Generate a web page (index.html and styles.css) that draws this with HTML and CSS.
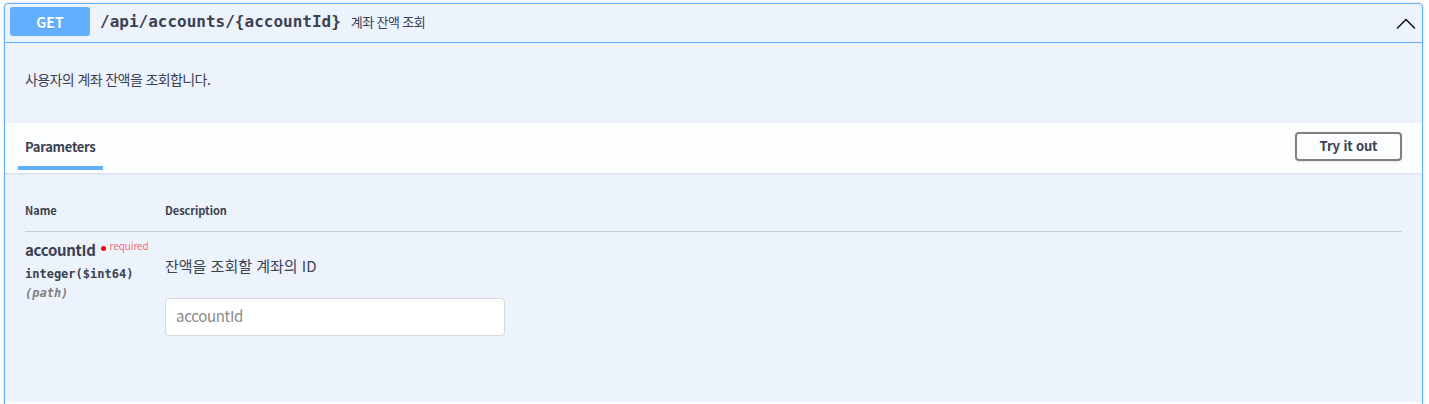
FILE: index.html
```html
<!DOCTYPE html>
<html lang="ko">
<head>
<meta charset="utf-8">
<title>GET /api/accounts/{accountId}</title>
<link rel="stylesheet" href="styles.css">
</head>
<body>
<div class="opblock">
  <div class="summary">
    <span class="method">GET</span>
    <span class="path">/api/accounts/{accountId}</span>
    <span class="summary-desc">계좌 잔액 조회</span>
    <svg class="arrow" width="20" height="20" viewBox="0 0 20 20"><path d="M1.5 15 L10 6.5 L18.5 15" fill="none" stroke="#111" stroke-width="1.5" stroke-linecap="round" stroke-linejoin="round"/></svg>
  </div>
  <div class="desc-wrapper">
    <p>사용자의 계좌 잔액을 조회합니다.</p>
  </div>
  <div class="section-header">
    <div class="tab"><span class="tab-label">Parameters</span></div>
    <button class="try-btn">Try it out</button>
  </div>
  <div class="table-container">
    <div class="param-head">
      <div class="col-name">Name</div>
      <div class="col-desc">Description</div>
    </div>
    <div class="param-row">
      <div class="col-name">
        <div class="param-name">accountId<span class="star"></span><span class="req">required</span></div>
        <div class="param-type">integer<span class="fmt">($int64)</span></div>
        <div class="param-in">(path)</div>
      </div>
      <div class="col-desc">
        <p class="param-desc">잔액을 조회할 계좌의 ID</p>
        <input class="param-input" type="text" placeholder="accountId">
      </div>
    </div>
  </div>
  <div class="responses-header"></div>
</div>
</body>
</html>
```
FILE: styles.css
```css
* { box-sizing: border-box; }
html, body { margin: 0; padding: 0; background: #fff; }
body {
  font-family: "Noto Sans CJK KR", "Noto Sans", sans-serif;
  color: #3b4151;
}
.opblock {
  margin: 3px 6px 0 4px;
  border: 1px solid #61affe;
  border-radius: 4px;
  background: #ecf3fc;
  box-shadow: 0 0 3px rgba(0, 0, 0, 0.19);
  overflow: hidden;
}
.summary {
  display: flex;
  align-items: center;
  padding: 3px 5px 6px 5px;
  border-bottom: 1px solid #61affe;
  height: 39px;
}
.method {
  display: flex;
  align-items: center;
  justify-content: center;
  width: 80px;
  height: 29px;
  background: #61affe;
  color: #fff;
  border-radius: 3px;
  font-size: 14px;
  font-weight: 700;
  text-shadow: 0 1px 0 rgba(0, 0, 0, 0.1);
}
.path {
  margin-left: 10px;
  font-family: "DejaVu Sans Mono", monospace;
  font-weight: 700;
  font-size: 16px;
  color: #3b4151;
}
.summary-desc {
  margin-left: 10px;
  font-size: 13px;
  letter-spacing: -0.6px;
  color: #3b4151;
  flex: 1;
}
.arrow { margin-right: 1px; margin-top: 3px; }
.desc-wrapper {
  padding: 26px 20px 34px;
}
.desc-wrapper p {
  margin: 0;
  font-size: 14px;
  letter-spacing: -0.6px;
  line-height: 20px;
}
.section-header {
  display: flex;
  align-items: center;
  justify-content: space-between;
  height: 50px;
  padding: 0 20px;
  background: rgba(255, 255, 255, 0.8);
  box-shadow: 0 1px 2px rgba(0, 0, 0, 0.1);
}
.tab {
  align-self: stretch;
  display: flex;
  align-items: center;
}
.tab-label {
  position: relative;
  font-size: 13px;
  font-weight: 700;
  letter-spacing: -0.3px;
  margin-top: -3px;
}
.tab-label::after {
  content: "";
  position: absolute;
  left: -10%;
  width: 120%;
  bottom: -14px;
  height: 4px;
  background: #61affe;
}
.try-btn {
  width: 107px;
  height: 29px;
  margin-top: -4px;
  border: 2px solid #808080;
  border-radius: 4px;
  background: transparent;
  font-family: "Noto Sans CJK KR", "Noto Sans", sans-serif;
  font-size: 13px;
  font-weight: 700;
  letter-spacing: -0.15px;
  color: #3b4151;
  box-shadow: 0 1px 2px rgba(0, 0, 0, 0.1);
  padding: 0 0 1px;
}
.table-container {
  padding: 29px 20px 66px;
}
.param-head {
  display: flex;
  font-size: 11px;
  font-weight: 700;
  letter-spacing: -0.05px;
  padding-bottom: 12px;
  border-bottom: 1px solid rgba(59, 65, 81, 0.2);
  line-height: 17px;
}
.col-name { width: 140px; flex: none; }
.col-desc { flex: 1; }
.param-row {
  display: flex;
  padding-top: 7px;
}
.param-name {
  display: flex;
  align-items: center;
  font-size: 15px;
  font-weight: 700;
  letter-spacing: -0.3px;
  line-height: 22px;
}
.star {
  width: 5px;
  height: 5px;
  margin-left: 5px;
  margin-top: -3px;
  border-radius: 50%;
  background: #f00;
}
.req {
  margin-left: 4px;
  margin-top: -8px;
  font-size: 10px;
  font-weight: 400;
  letter-spacing: -0.1px;
  color: rgba(255, 0, 0, 0.6);
}
.param-type {
  margin-top: 5px;
  font-family: "DejaVu Sans Mono", monospace;
  font-size: 12px;
  font-weight: 700;
  line-height: 17px;
}
.param-in {
  margin-top: 2px;
  font-family: "DejaVu Sans Mono", monospace;
  font-size: 12px;
  font-style: italic;
  font-weight: 700;
  color: gray;
  line-height: 17px;
}
.param-desc {
  margin: 16px 0 0;
  font-size: 15px;
  line-height: 22px;
}
.param-input {
  display: block;
  width: 340px;
  height: 38px;
  margin-top: 21px;
  padding: 0 10px 3px;
  border: 1px solid #d9d9d9;
  border-radius: 4px;
  background: #fff;
  font-family: "Noto Sans CJK KR", "Noto Sans", sans-serif;
  font-size: 15px;
  color: #3b4151;
}
.param-input::placeholder { color: #8a8a8a; letter-spacing: -0.3px; }
.responses-header {
  height: 20px;
  background: rgba(255, 255, 255, 0.8);
}
```
